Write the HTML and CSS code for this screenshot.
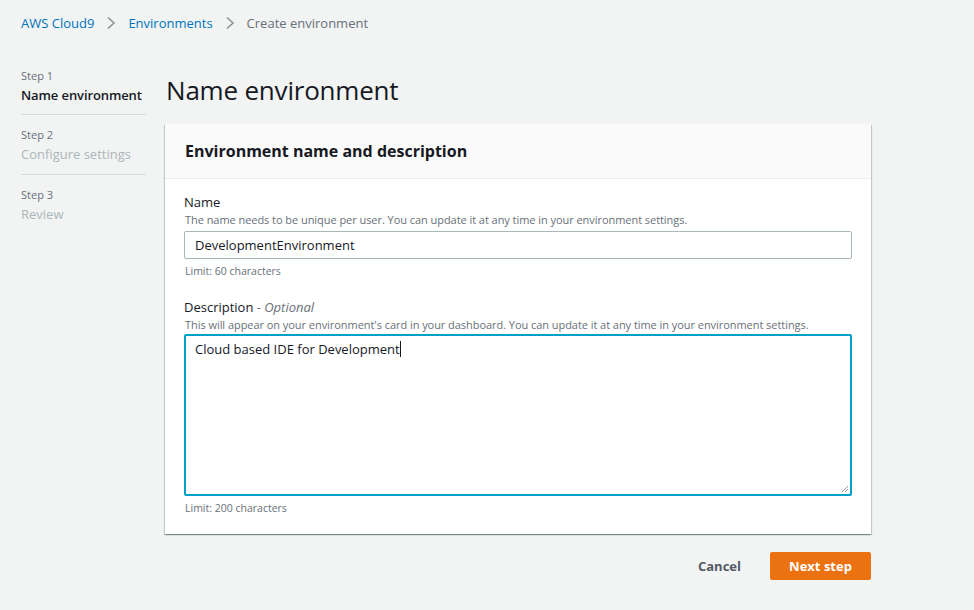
FILE: index.html
```html
<!DOCTYPE html>
<html lang="en">
<head>
<meta charset="utf-8">
<title>Create environment</title>
<link rel="stylesheet" href="styles.css">
</head>
<body>
<div class="page">
  <nav class="crumbs">
    <a class="crumb-link">AWS Cloud9</a>
    <svg class="chev" width="10" height="14" viewBox="0 0 10 14"><path d="M2 1.5 L8 7 L2 12.5" fill="none" stroke="#879596" stroke-width="1.6"/></svg>
    <a class="crumb-link">Environments</a>
    <svg class="chev" width="10" height="14" viewBox="0 0 10 14"><path d="M2 1.5 L8 7 L2 12.5" fill="none" stroke="#879596" stroke-width="1.6"/></svg>
    <span class="crumb-current">Create environment</span>
  </nav>
  <div class="layout">
    <aside class="steps">
      <div class="step">
        <div class="step-num">Step 1</div>
        <div class="step-name active">Name environment</div>
      </div>
      <div class="step">
        <div class="step-num">Step 2</div>
        <div class="step-name">Configure settings</div>
      </div>
      <div class="step last">
        <div class="step-num">Step 3</div>
        <div class="step-name">Review</div>
      </div>
    </aside>
    <main class="main">
      <h1 class="title">Name environment</h1>
      <section class="card">
        <header class="card-head">
          <h2 class="card-title">Environment name and description</h2>
        </header>
        <div class="card-body">
          <div class="field">
            <div class="label">Name</div>
            <div class="help">The name needs to be unique per user. You can update it at any time in your environment settings.</div>
            <div class="input">DevelopmentEnvironment</div>
            <div class="limit">Limit: 60 characters</div>
          </div>
          <div class="field">
            <div class="label">Description <span class="opt">- Optional</span></div>
            <div class="help">This will appear on your environment's card in your dashboard. You can update it at any time in your environment settings.</div>
            <div class="textarea">Cloud based IDE for Development<span class="caret"></span>
              <svg class="grip" width="8" height="8" viewBox="0 0 8 8"><path d="M7 1 L1 7 M7 4 L4 7" stroke="#879596" stroke-width="1"/></svg>
            </div>
            <div class="limit">Limit: 200 characters</div>
          </div>
        </div>
      </section>
      <div class="actions">
        <button class="btn-link">Cancel</button>
        <button class="btn-primary">Next step</button>
      </div>
    </main>
  </div>
</div>
</body>
</html>
```
FILE: styles.css
```css
* { box-sizing: border-box; }
html, body { margin: 0; padding: 0; }
body {
  background: #f2f3f3;
  font-family: "Open Sans", "Liberation Sans", sans-serif;
  color: #16191f;
  width: 974px;
  height: 610px;
  overflow: hidden;
}
.page { padding: 14px 20px 0 21px; }
.crumbs {
  display: flex;
  align-items: center;
  font-size: 13px;
  height: 18px;
}
.crumb-link { color: #0073bb; }
.crumb-current { color: #687078; }
.chev { margin: 0 12px 0 12px; }
.layout {
  display: flex;
  margin-top: 36px;
}
.steps { width: 125px; flex: none; }
.step {
  border-bottom: 1px solid #d5dbdb;
  padding: 12px 0 10px;
}
.step.last { border-bottom: none; }
.step:first-child { padding-top: 0; padding-bottom: 9px; }
.step-num { font-size: 11px; color: #687078; line-height: 16px; }
.step-name { font-size: 13px; color: #aab7b8; line-height: 20px; margin-top: 1px; white-space: nowrap; }
.step-name.active { color: #16191f; font-weight: 600; letter-spacing: -0.1px; }
.main { margin-left: 19px; width: 706px; }
.title {
  margin: 5px 0 0 1px;
  font-size: 26px;
  font-weight: 400;
  line-height: 34px;
  letter-spacing: -0.2px;
}
.card {
  margin-top: 17px;
  background: #fff;
  box-shadow: 0 1px 1px 0 rgba(0,28,36,.3), 1px 1px 1px 0 rgba(0,28,36,.15), -1px 1px 1px 0 rgba(0,28,36,.15);
}
.card-head {
  background: #fafafa;
  border-bottom: 1px solid #eaeded;
  height: 55px;
  display: flex;
  align-items: center;
  padding: 0 20px;
}
.card-title { margin: 0; font-size: 16px; font-weight: 700; line-height: 22px; }
.card-body { padding: 13px 19px 19px 19px; }
.field + .field { margin-top: 19px; }
.label { font-size: 13px; line-height: 20px; color: #16191f; }
.opt { color: #687078; font-style: italic; }
.help { font-size: 11px; line-height: 15px; color: #687078; margin-left: 1px; letter-spacing: -0.05px; }
.input {
  margin-top: 4px;
  height: 28px;
  border: 1px solid #aab7b8;
  border-radius: 2px;
  padding: 0 10px;
  font-size: 13px;
  line-height: 26px;
}
.limit { font-size: 10.5px; line-height: 14px; color: #687078; margin-top: 5px; margin-left: 1px; }
.textarea {
  position: relative;
  margin-top: 2px;
  height: 162px;
  border: 2px solid #00a1c9;
  border-radius: 2px;
  padding: 3px 9px;
  font-size: 13px;
  line-height: 20px;
}
.caret {
  display: inline-block;
  width: 1px;
  height: 16px;
  background: #16191f;
  vertical-align: -3px;
}
.grip { position: absolute; right: 1px; bottom: 1px; }
.actions {
  display: flex;
  justify-content: flex-end;
  align-items: center;
  margin-top: 18px;
}
.btn-link {
  background: none;
  border: none;
  font-family: inherit;
  font-size: 13px;
  font-weight: 700;
  color: #545b64;
  padding: 0 20px;
  margin-right: 9px;
}
.btn-primary {
  background: #ec7211;
  border: 1px solid #ec7211;
  border-radius: 2px;
  color: #fff;
  font-family: inherit;
  font-size: 13px;
  font-weight: 700;
  height: 28px;
  width: 101px;
  padding: 0;
}
```
